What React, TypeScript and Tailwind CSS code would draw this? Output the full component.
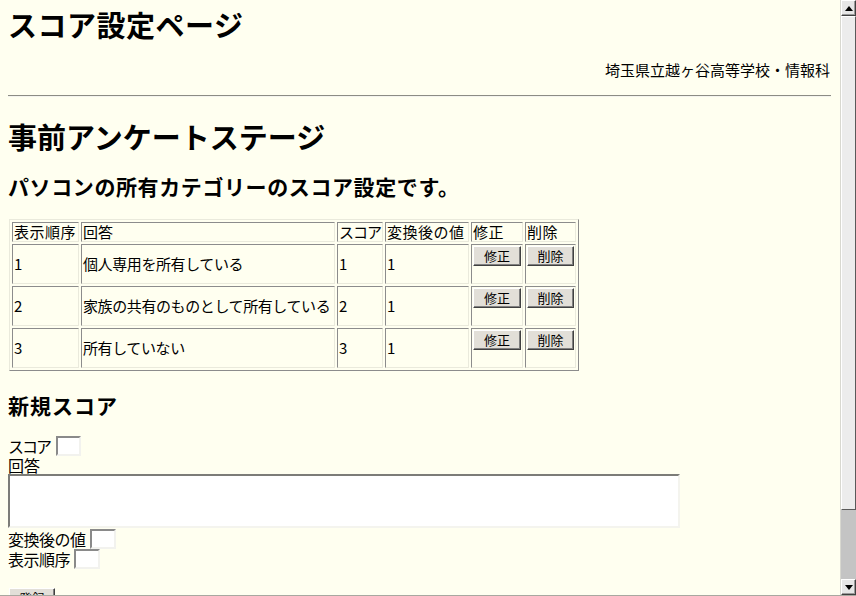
import React from "react";

const jp = { fontFamily: '"Noto Sans CJK JP", "Noto Sans", sans-serif' };

function Btn({ label, w = 48 }: { label: string; w?: number }) {
  return (
    <button
      type="button"
      style={{ width: w }}
      className="h-[20px] bg-[#e2dfd8] text-[13px] leading-[16px] text-black border border-t-white border-l-white border-r-[#404040] border-b-[#404040] shadow-[inset_-1px_-1px_0_#808080] flex items-center justify-center p-0"
    >
      {label}
    </button>
  );
}

function SmallInput({ w = 25 }: { w?: number }) {
  return (
    <span
      style={{ width: w }}
      className="inline-block h-[20px] bg-white border-2 border-t-[#8a8a8a] border-l-[#8a8a8a] border-r-[#f2f2ee] border-b-[#f2f2ee]"
    />
  );
}

const cellBase =
  "border border-t-[#8c8c8c] border-l-[#8c8c8c] border-r-[#eaeadc] border-b-[#eaeadc] px-[1px] whitespace-nowrap";

const rows = [
  { order: "1", answer: "個人専用を所有している", score: "1", value: "1" },
  { order: "2", answer: "家族の共有のものとして所有している", score: "2", value: "1" },
  { order: "3", answer: "所有していない", score: "3", value: "1" },
];

function Arrow({ up }: { up: boolean }) {
  return (
    <div className="h-[16px] bg-[#e6e6e6] border border-t-white border-l-white border-r-[#404040] border-b-[#404040] shadow-[inset_-1px_-1px_0_#9a9a9a] flex items-center justify-center">
      <svg width="8" height="5" viewBox="0 0 8 5">
        {up ? <polygon points="0,5 8,5 4,0" fill="#000" /> : <polygon points="0,0 8,0 4,5" fill="#000" />}
      </svg>
    </div>
  );
}

export default function App() {
  return (
    <div className="w-[856px] h-[596px] bg-[#fffff0] flex border-b border-[#a8a8a0] overflow-hidden text-black" style={jp}>
      <div className="w-[840px] h-[595px] overflow-hidden px-[8px]">
        <h1 className="mt-[7px] text-[29px] leading-[34px] font-bold tracking-[0.5px]">スコア設定ページ</h1>
        <div className="mt-[19px] text-right text-[15px] leading-[20px] pr-[2px]">埼玉県立越ヶ谷高等学校・情報科</div>
        <div className="mt-[15px] h-[2px] mr-[1px] border-t border-t-[#8c8c84] border-b border-b-[#f4f4ee]" />
        <h2 className="mt-[22px] text-[29px] leading-[34px] font-bold">事前アンケートステージ</h2>
        <h3 className="mt-[20px] text-[21px] leading-[26px] font-bold tracking-[0.6px]">パソコンの所有カテゴリーのスコア設定です。</h3>

        <table className="mt-[20px] ml-[1px] border-separate border-spacing-[2px] table-fixed border border-t-[#eaeadc] border-l-[#eaeadc] border-r-[#8c8c8c] border-b-[#8c8c8c] text-[15px]">
          <colgroup>
            <col className="w-[67px]" />
            <col className="w-[254px]" />
            <col className="w-[45px]" />
            <col className="w-[84px]" />
            <col className="w-[52px]" />
            <col className="w-[51px]" />
          </colgroup>
          <thead>
            <tr>
              <th className={`${cellBase} h-[20px] font-normal text-left leading-[16px] tracking-[0.5px]`}>表示順序</th>
              <th className={`${cellBase} h-[20px] font-normal text-left leading-[16px]`}>回答</th>
              <th className={`${cellBase} h-[20px] font-normal text-left leading-[16px] tracking-[-1px]`}>スコア</th>
              <th className={`${cellBase} h-[20px] font-normal text-left leading-[16px] tracking-[0.5px]`}>変換後の値</th>
              <th className={`${cellBase} h-[20px] font-normal text-left leading-[16px] tracking-[0.5px]`}>修正</th>
              <th className={`${cellBase} h-[20px] font-normal text-left leading-[16px] tracking-[0.5px]`}>削除</th>
            </tr>
          </thead>
          <tbody>
            {rows.map((r) => (
              <tr key={r.order}>
                <td className={`${cellBase} h-[40px] align-middle`}>{r.order}</td>
                <td className={`${cellBase} h-[40px] align-middle tracking-[-0.4px]`}>{r.answer}</td>
                <td className={`${cellBase} h-[40px] align-middle`}>{r.score}</td>
                <td className={`${cellBase} h-[40px] align-middle`}>{r.value}</td>
                <td className={`${cellBase} h-[40px] align-top pt-[1px]`}>
                  <Btn label="修正" />
                </td>
                <td className={`${cellBase} h-[40px] align-top pt-[1px]`}>
                  <Btn label="削除" w={47} />
                </td>
              </tr>
            ))}
          </tbody>
        </table>

        <h3 className="mt-[21px] text-[21px] leading-[26px] font-bold tracking-[1px]">新規スコア</h3>

        <div className="mt-[17px] flex items-center h-[21px] text-[16px]">
          <span className="leading-[18px] tracking-[-2px]">スコア</span>
          <span className="ml-[6px] flex">
            <SmallInput />
          </span>
        </div>
        <div className="h-[18px] text-[16px] leading-[18px]">回答</div>
        <div className="h-[54px] w-[672px] bg-white border-2 border-t-[#7c7c78] border-l-[#7c7c78] border-r-[#f4f4ee] border-b-[#f4f4ee]" />
        <div className="flex items-end h-[21px] text-[16px]">
          <span className="leading-[19px] tracking-[-0.5px]">変換後の値</span>
          <span className="ml-[4px] flex">
            <SmallInput w={26} />
          </span>
        </div>
        <div className="flex items-end h-[20px] text-[16px]">
          <span className="leading-[19px] tracking-[-0.5px]">表示順序</span>
          <span className="ml-[4px] flex">
            <SmallInput w={26} />
          </span>
        </div>
        <div className="mt-[19px] ml-[1px]">
          <Btn label="登録" w={46} />
        </div>
      </div>

      <div className="w-[16px] h-[595px] flex flex-col border-l border-[#d8d8d0]">
        <Arrow up />
        <div className="flex-1 bg-[#ececec] border border-t-white border-l-white border-r-[#5a5a5a] border-b-[#5a5a5a]" />
        <div className="h-[69px] bg-[#c4c4c4]" />
        <Arrow up={false} />
      </div>
    </div>
  );
}
